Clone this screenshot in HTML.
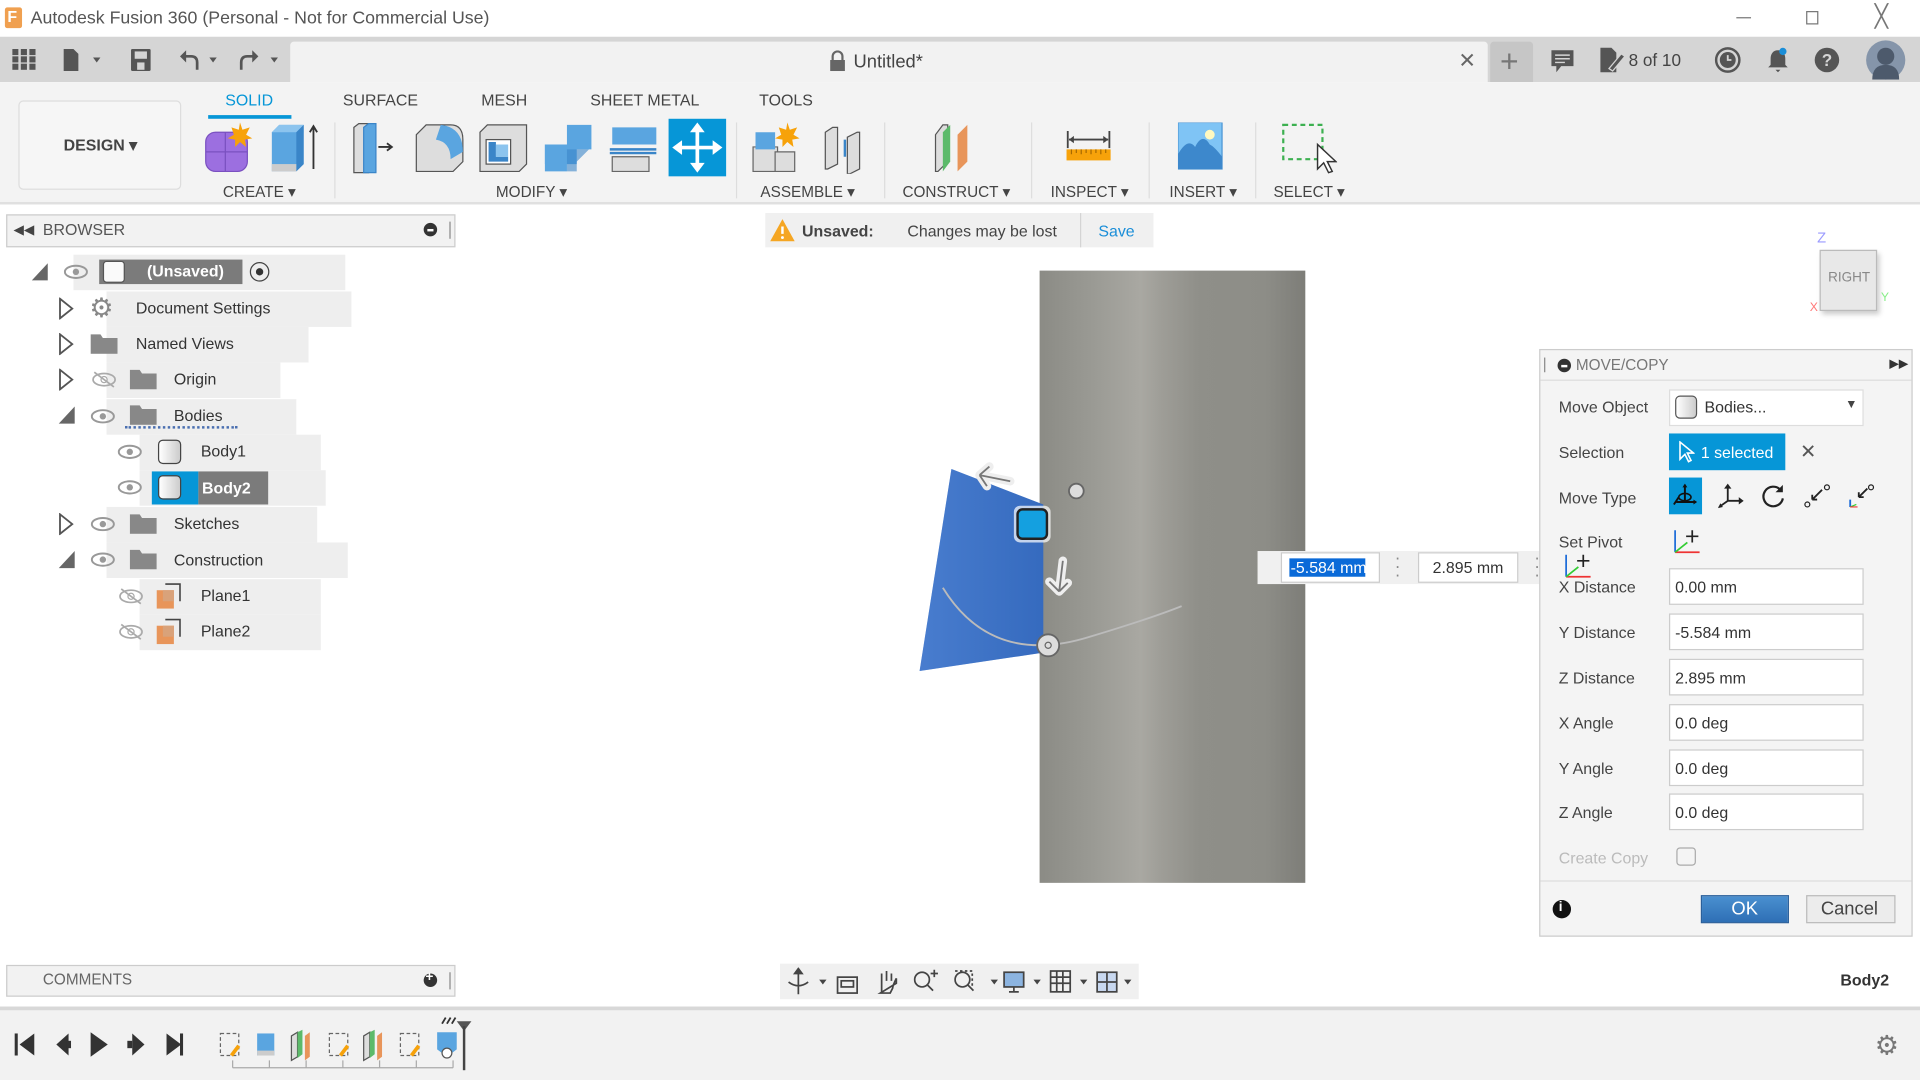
<!DOCTYPE html>
<html><head><meta charset="utf-8">
<style>
*{box-sizing:border-box;margin:0;padding:0}
html,body{width:1920px;height:1080px;overflow:hidden;background:#fff;font-family:"Liberation Sans",sans-serif}
#w{position:absolute;left:0;top:0;width:1568px;height:882px;transform:scale(1.22449);transform-origin:0 0;color:#333}
.a{position:absolute}
.t{position:absolute;white-space:nowrap}
.box{position:absolute;background:#eeeeee}
.tree .t{font-size:13px;color:#333}
.inp{position:absolute;left:1363px;width:159px;height:30px;background:#fff;border:1px solid #ccc;font-size:13px;padding:7px 4px;color:#333}
.pl{position:absolute;left:1273px;font-size:13px;color:#444}
.sep{position:absolute;top:100px;width:1px;height:62px;background:#ddd}
</style></head><body><div id="w">

<!-- title bar -->
<div class="a" style="left:0;top:0;width:1568px;height:30px;background:#fff"></div>
<div class="a" style="left:4px;top:6px;width:14px;height:17px;background:#f0a050;border-radius:2px"></div>
<div class="t" style="left:6px;top:6px;font-size:13px;font-weight:bold;color:#fff">F</div>
<div class="t" style="left:25px;top:7px;font-size:14.5px;color:#555">Autodesk Fusion 360 (Personal - Not for Commercial Use)</div>
<div class="a" style="left:1418px;top:14px;width:12px;height:1px;background:#777"></div>
<div class="a" style="left:1475px;top:9px;width:10px;height:11px;border:1px solid #777"></div>
<div class="t" style="left:1531px;top:3px;font-size:18px;color:#777">╳</div>

<!-- tab bar -->
<div class="a" style="left:0;top:30px;width:1568px;height:37px;background:#d5d5d5"></div>
<div class="a" style="left:237px;top:34px;width:978px;height:33px;background:#f2f2f2;border-radius:3px 3px 0 0"></div>
<svg class="a" style="left:10px;top:40px" width="20" height="18"><g fill="#555"><rect x="0" y="0" width="5" height="5"/><rect x="7" y="0" width="5" height="5"/><rect x="14" y="0" width="5" height="5"/><rect x="0" y="6" width="5" height="5"/><rect x="7" y="6" width="5" height="5"/><rect x="14" y="6" width="5" height="5"/><rect x="0" y="12" width="5" height="5"/><rect x="7" y="12" width="5" height="5"/><rect x="14" y="12" width="5" height="5"/></g></svg>
<svg class="a" style="left:50px;top:38px" width="36" height="22"><path d="M2 2h8l4 4v14H2z" fill="#555"/><path d="M26 9l3 4 3-4z" fill="#555"/></svg>
<svg class="a" style="left:106px;top:39px" width="18" height="20"><rect x="1" y="1" width="16" height="18" fill="#555" rx="1"/><rect x="4" y="3" width="10" height="6" fill="#d5d5d5"/><rect x="6" y="12" width="6" height="6" fill="#d5d5d5"/></svg>
<svg class="a" style="left:145px;top:38px" width="90" height="22">
<path d="M16 19V13q0-5-5-5H4" stroke="#555" stroke-width="2.2" fill="none"/><path d="M2 8l5-5v10z" fill="#555"/>
<path d="M26 9l3 4 3-4z" fill="#555"/>
<path d="M52 19V13q0-5 5-5h7" stroke="#555" stroke-width="2.2" fill="none"/><path d="M66 8l-5-5v10z" fill="#555"/>
<path d="M76 9l3 4 3-4z" fill="#555"/></svg>
<svg class="a" style="left:677px;top:41px" width="14" height="18"><path d="M3 8V5a4 4 0 0 1 8 0v3" stroke="#666" stroke-width="1.8" fill="none"/><rect x="1" y="8" width="12" height="9" fill="#666"/></svg>
<div class="t" style="left:697px;top:42px;font-size:15px;color:#444">Untitled*</div>
<div class="t" style="left:1191px;top:40px;font-size:17px;color:#666">✕</div>
<div class="a" style="left:1217px;top:34px;width:35px;height:33px;background:#c6c6c6;border-radius:3px 3px 0 0"></div>
<div class="t" style="left:1225px;top:35px;font-size:26px;color:#777">+</div>
<svg class="a" style="left:1266px;top:40px" width="20" height="20"><path d="M1 1h18v13H9l-4 5v-5H1z" fill="#555"/><path d="M4 5h12M4 8h12M4 11h8" stroke="#d5d5d5" stroke-width="1.2"/></svg>
<svg class="a" style="left:1305px;top:38px" width="24" height="22"><path d="M2 1h9l4 4v16H2z" fill="#555"/><path d="M9 18l10-12 3 2-10 12z" fill="#555" stroke="#d5d5d5"/></svg>
<div class="t" style="left:1330px;top:41px;font-size:14px;color:#444">8 of 10</div>
<svg class="a" style="left:1400px;top:38px" width="22" height="22"><circle cx="11" cy="11" r="9.5" fill="none" stroke="#555" stroke-width="2"/><circle cx="11" cy="11" r="6.5" fill="#555"/><path d="M11 7v4h3" stroke="#d5d5d5" stroke-width="1.5" fill="none"/></svg>
<svg class="a" style="left:1442px;top:38px" width="20" height="22"><path d="M10 3c-4 0-6 3-6 7v5l-2 2h16l-2-2v-5c0-4-2-7-6-7zM8 19h4l-2 2z" fill="#555"/><circle cx="14" cy="4" r="3" fill="#1a8ed8"/></svg>
<svg class="a" style="left:1481px;top:38px" width="22" height="22"><circle cx="11" cy="11" r="10" fill="#555"/><text x="11" y="16" font-size="14" font-weight="bold" text-anchor="middle" fill="#d5d5d5" font-family="Liberation Sans">?</text></svg>
<div class="a" style="left:1524px;top:33px;width:32px;height:32px;border-radius:50%;background:#8595aa"></div>
<svg class="a" style="left:1524px;top:33px" width="32" height="32"><circle cx="16" cy="13" r="7" fill="#4d5a6c"/><path d="M5 32q0-12 11-12t11 12z" fill="#4d5a6c"/></svg>

<!-- ribbon -->
<div class="a" style="left:0;top:67px;width:1568px;height:100px;background:#f3f3f3;border-bottom:2px solid #e0e0e0"></div>
<div class="a" style="left:15px;top:82px;width:133px;height:73px;background:#f6f6f6;border:1px solid #ddd;border-radius:4px"></div>
<div class="t" style="left:52px;top:111px;font-size:13px;font-weight:bold;color:#444">DESIGN ▾</div>
<div class="t" style="left:184px;top:74px;font-size:13px;color:#0696d7">SOLID</div>
<div class="a" style="left:170px;top:94px;width:68px;height:3px;background:#0696d7"></div>
<div class="t" style="left:280px;top:74px;font-size:13px;color:#444">SURFACE</div>
<div class="t" style="left:393px;top:74px;font-size:13px;color:#444">MESH</div>
<div class="t" style="left:482px;top:74px;font-size:13px;color:#444">SHEET METAL</div>
<div class="t" style="left:620px;top:74px;font-size:13px;color:#444">TOOLS</div>
<div class="t" style="left:182px;top:149px;font-size:12.5px;color:#444">CREATE ▾</div>
<div class="t" style="left:405px;top:149px;font-size:12.5px;color:#444">MODIFY ▾</div>
<div class="t" style="left:621px;top:149px;font-size:12.5px;color:#444">ASSEMBLE ▾</div>
<div class="t" style="left:737px;top:149px;font-size:12.5px;color:#444">CONSTRUCT ▾</div>
<div class="t" style="left:858px;top:149px;font-size:12.5px;color:#444">INSPECT ▾</div>
<div class="t" style="left:955px;top:149px;font-size:12.5px;color:#444">INSERT ▾</div>
<div class="t" style="left:1040px;top:149px;font-size:12.5px;color:#444">SELECT ▾</div>
<div class="sep" style="left:273px"></div><div class="sep" style="left:601px"></div><div class="sep" style="left:722px"></div><div class="sep" style="left:842px"></div><div class="sep" style="left:938px"></div><div class="sep" style="left:1025px"></div>
<svg class="a" style="left:166px;top:100px" width="44" height="42"><rect x="2" y="8" width="34" height="32" rx="8" fill="#9c6fe0" stroke="#7a50c0"/><path d="M2 24h34M18 8v32" stroke="#7a50c0"/><path d="M30 0l2 6 6-2-3 6 5 3-6 1 1 6-5-4-4 4 0-6-6-1 5-3-2-6 6 2z" fill="#f7a20a"/></svg>
<svg class="a" style="left:220px;top:100px" width="42" height="42"><path d="M2 8l6-6h20v32l-6 6H2z" fill="#5aa5e0"/><path d="M22 8h-20l6-6h20z" fill="#8cc4ee"/><path d="M22 8v32l6-6V2z" fill="#3a85c8"/><rect x="2" y="34" width="20" height="6" fill="#ccc"/><path d="M36 38V4M33 8l3-5 3 5" stroke="#333" stroke-width="1.5" fill="none"/></svg>
<svg class="a" style="left:287px;top:100px" width="40" height="42"><path d="M2 4l4-3h8v40H2z" fill="#ddd" stroke="#555"/><path d="M10 4l4-3h6v40H10z" fill="#5aa5e0" stroke="#3a85c8"/><path d="M22 20h10M29 17l4 3-4 3" stroke="#333" stroke-width="1.5" fill="none"/></svg>
<svg class="a" style="left:338px;top:100px" width="42" height="42"><path d="M2 10l8-8h20q10 0 10 12v18l-8 8H2z" fill="#ddd" stroke="#555"/><path d="M22 2q18 2 18 22l-10 6q0-14-12-16z" fill="#5aa5e0"/></svg>
<svg class="a" style="left:390px;top:100px" width="42" height="42"><path d="M2 8l6-6h32v32l-6 6H2z" fill="#ddd" stroke="#555"/><rect x="7" y="14" width="20" height="20" fill="#fff" stroke="#555"/><path d="M9 16h6v12h10v4H9z" fill="#3a85c8"/><path d="M15 28h10v-10h-10z" fill="#8cc4ee"/></svg>
<svg class="a" style="left:443px;top:100px" width="42" height="42"><path d="M20 2h20v20H28v12H2V18h18z" fill="#5aa5e0"/><path d="M2 18h18v22H2z" fill="#5aa5e0"/><path d="M20 22h18l-10 10v8H20z" fill="#3a85c8" opacity=".6"/></svg>
<svg class="a" style="left:496px;top:100px" width="42" height="42"><path d="M4 4h36v14H4z" fill="#5aa5e0"/><path d="M2 22h38M2 25h38" stroke="#3a85c8" stroke-width="2"/><path d="M4 28h30v12H4z" fill="#ddd" stroke="#666"/></svg>
<div class="a" style="left:546px;top:97px;width:47px;height:47px;background:#0696d7"></div>
<svg class="a" style="left:546px;top:97px" width="47" height="47"><path d="M23.5 5v37M5 23.5h37" stroke="#fff" stroke-width="3"/><path d="M23.5 3l-6 8h12zM23.5 44l-6-8h12zM3 23.5l8-6v12zM44 23.5l-8-6v12z" fill="#fff"/></svg>
<svg class="a" style="left:613px;top:100px" width="44" height="42"><path d="M2 20h20v20H2z" fill="#ddd" stroke="#666"/><path d="M20 24h16v16H20z" fill="#ddd" stroke="#666"/><path d="M4 8h16v14H4z" fill="#5aa5e0"/><path d="M30 0l2 6 6-2-3 6 5 3-6 1 1 6-5-4-4 4 0-6-6-1 5-3-2-6 6 2z" fill="#f7a20a"/></svg>
<svg class="a" style="left:668px;top:100px" width="40" height="42"><path d="M6 8l6-4h4v30l-8 4H6z" fill="#ddd" stroke="#555"/><path d="M24 12l8-4h2v30l-8 4h-2z" fill="#ddd" stroke="#555"/><path d="M22 14v14" stroke="#3a85c8" stroke-width="2"/></svg>
<svg class="a" style="left:760px;top:100px" width="42" height="42"><path d="M4 10l6-8h4v30l-8 8H4z" fill="#ddd" stroke="#555"/><path d="M10 8l6-6v30l-6 8z" fill="#5cba6a"/><path d="M22 10l8-8v30l-8 8z" fill="#e8955a"/></svg>
<svg class="a" style="left:870px;top:105px" width="40" height="30"><path d="M2 2v14M36 2v14M3 9h32" stroke="#444" stroke-width="1.5"/><path d="M3 9l4-3v6zM35 9l-4-3v6z" fill="#444"/><rect x="1" y="17" width="36" height="9" fill="#f7a20a"/><path d="M5 17v4M9 17v3M13 17v4M17 17v3M21 17v4M25 17v3M29 17v4M33 17v3" stroke="#a86a00"/></svg>
<svg class="a" style="left:962px;top:100px" width="38" height="40"><rect x="0" y="0" width="36" height="38" fill="#7fc4f5" stroke="#4a95d5"/><path d="M0 38V26q8-14 14-6 6-12 12-2 4 2 10 10v10z" fill="#3d88cc"/><circle cx="26" cy="10" r="4" fill="#fff9c0"/></svg>
<svg class="a" style="left:1046px;top:100px" width="46" height="46"><rect x="2" y="2" width="32" height="28" fill="none" stroke="#3cb050" stroke-width="1.8" stroke-dasharray="4 3"/><path d="M30 18v20l5-5 4 8 3-1-4-8h7z" fill="#fff" stroke="#333" stroke-width="1.2"/></svg>

<!-- browser -->
<div class="a" style="left:5px;top:175px;width:367px;height:27px;background:#f2f2f2;border:1px solid #ccc"></div>
<div class="t" style="left:11px;top:181px;font-size:11px;color:#444">◀◀</div>
<div class="t" style="left:35px;top:180px;font-size:13px;color:#555">BROWSER</div>
<div class="a" style="left:346px;top:182px;width:11px;height:11px;border-radius:50%;background:#333"></div>
<div class="a" style="left:349px;top:187px;width:5px;height:1.5px;background:#fff"></div>
<div class="a" style="left:367px;top:181px;width:1px;height:14px;background:#888"></div>

<div class="tree">
<div class="box" style="left:60px;top:208px;width:222px;height:29px"></div>
<svg class="a" style="left:25px;top:214px" width="16" height="16"><path d="M14 1v14H1z" fill="#666"/></svg>
<svg class="a" style="left:52px;top:216px" width="20" height="12"><ellipse cx="10" cy="6" rx="9" ry="5" fill="none" stroke="#999" stroke-width="1.6"/><circle cx="10" cy="6" r="2.6" fill="#999"/></svg>
<div class="a" style="left:81px;top:212px;width:117px;height:20px;background:#7b7b7b"></div>
<div class="a" style="left:84px;top:213px;width:18px;height:18px;background:#fafafa;border:1px solid #555;border-radius:3px"></div>
<div class="t" style="left:120px;top:214px;font-weight:bold;color:#fff">(Unsaved)</div>
<div class="a" style="left:204px;top:214px;width:16px;height:16px;border-radius:50%;border:1.5px solid #444"></div>
<div class="a" style="left:209px;top:219px;width:6px;height:6px;border-radius:50%;background:#333"></div>
<div class="box" style="left:87px;top:238px;width:200px;height:29px"></div>
<svg class="a" style="left:47px;top:243px" width="14" height="18"><path d="M2 1l10 8-10 8z" fill="none" stroke="#555" stroke-width="1.5"/></svg>
<div class="t" style="left:73px;top:239px;font-size:22px;color:#888">⚙</div>
<div class="t" style="left:111px;top:244px">Document Settings</div>
<div class="box" style="left:87px;top:267px;width:165px;height:29px"></div>
<svg class="a" style="left:47px;top:272px" width="14" height="18"><path d="M2 1l10 8-10 8z" fill="none" stroke="#555" stroke-width="1.5"/></svg>
<svg class="a" style="left:74px;top:273px" width="22" height="16"><path d="M0 0h8l2 3h12v13H0z" fill="#888"/></svg>
<div class="t" style="left:111px;top:273px">Named Views</div>
<div class="box" style="left:87px;top:296px;width:142px;height:29px"></div>
<svg class="a" style="left:47px;top:301px" width="14" height="18"><path d="M2 1l10 8-10 8z" fill="none" stroke="#555" stroke-width="1.5"/></svg>
<svg class="a" style="left:74px;top:303px" width="22" height="14"><ellipse cx="11" cy="7" rx="9" ry="5" fill="none" stroke="#aaa" stroke-width="1.4"/><circle cx="11" cy="7" r="2.5" fill="none" stroke="#aaa"/><path d="M3 1l16 12" stroke="#aaa" stroke-width="1.4"/></svg>
<svg class="a" style="left:106px;top:302px" width="22" height="16"><path d="M0 0h8l2 3h12v13H0z" fill="#888"/></svg>
<div class="t" style="left:142px;top:302px">Origin</div>
<div class="box" style="left:87px;top:326px;width:155px;height:29px"></div>
<svg class="a" style="left:47px;top:331px" width="16" height="16"><path d="M14 1v14H1z" fill="#666"/></svg>
<svg class="a" style="left:74px;top:334px" width="20" height="12"><ellipse cx="10" cy="6" rx="9" ry="5" fill="none" stroke="#999" stroke-width="1.6"/><circle cx="10" cy="6" r="2.6" fill="#999"/></svg>
<svg class="a" style="left:106px;top:331px" width="22" height="16"><path d="M0 0h8l2 3h12v13H0z" fill="#888"/></svg>
<div class="t" style="left:142px;top:332px">Bodies</div>
<div class="a" style="left:102px;top:347px;width:92px;height:3px;border-bottom:2px dotted #4a6fb0"></div>
<div class="box" style="left:114px;top:355px;width:148px;height:29px"></div>
<svg class="a" style="left:96px;top:363px" width="20" height="12"><ellipse cx="10" cy="6" rx="9" ry="5" fill="none" stroke="#999" stroke-width="1.6"/><circle cx="10" cy="6" r="2.6" fill="#999"/></svg>
<div class="a" style="left:129px;top:359px;width:19px;height:20px;background:linear-gradient(90deg,#fff,#ccc);border:1.5px solid #444;border-radius:4px"></div>
<div class="t" style="left:164px;top:361px">Body1</div>
<div class="box" style="left:114px;top:384px;width:152px;height:29px"></div>
<svg class="a" style="left:96px;top:392px" width="20" height="12"><ellipse cx="10" cy="6" rx="9" ry="5" fill="none" stroke="#999" stroke-width="1.6"/><circle cx="10" cy="6" r="2.6" fill="#999"/></svg>
<div class="a" style="left:124px;top:385px;width:38px;height:27px;background:#0696d7"></div>
<div class="a" style="left:162px;top:385px;width:57px;height:27px;background:#7b7b7b"></div>
<div class="a" style="left:129px;top:388px;width:19px;height:20px;background:linear-gradient(90deg,#fff,#ccc);border:1.5px solid #444;border-radius:4px"></div>
<div class="t" style="left:165px;top:391px;font-weight:bold;color:#fff">Body2</div>
<div class="box" style="left:87px;top:414px;width:172px;height:29px"></div>
<svg class="a" style="left:47px;top:419px" width="14" height="18"><path d="M2 1l10 8-10 8z" fill="none" stroke="#555" stroke-width="1.5"/></svg>
<svg class="a" style="left:74px;top:422px" width="20" height="12"><ellipse cx="10" cy="6" rx="9" ry="5" fill="none" stroke="#999" stroke-width="1.6"/><circle cx="10" cy="6" r="2.6" fill="#999"/></svg>
<svg class="a" style="left:106px;top:420px" width="22" height="16"><path d="M0 0h8l2 3h12v13H0z" fill="#888"/></svg>
<div class="t" style="left:142px;top:420px">Sketches</div>
<div class="box" style="left:87px;top:443px;width:197px;height:29px"></div>
<svg class="a" style="left:47px;top:449px" width="16" height="16"><path d="M14 1v14H1z" fill="#666"/></svg>
<svg class="a" style="left:74px;top:451px" width="20" height="12"><ellipse cx="10" cy="6" rx="9" ry="5" fill="none" stroke="#999" stroke-width="1.6"/><circle cx="10" cy="6" r="2.6" fill="#999"/></svg>
<svg class="a" style="left:106px;top:449px" width="22" height="16"><path d="M0 0h8l2 3h12v13H0z" fill="#888"/></svg>
<div class="t" style="left:142px;top:450px">Construction</div>
<div class="box" style="left:114px;top:473px;width:148px;height:29px"></div>
<svg class="a" style="left:96px;top:480px" width="22" height="14"><ellipse cx="11" cy="7" rx="9" ry="5" fill="none" stroke="#aaa" stroke-width="1.4"/><circle cx="11" cy="7" r="2.5" fill="none" stroke="#aaa"/><path d="M3 1l16 12" stroke="#aaa" stroke-width="1.4"/></svg>
<svg class="a" style="left:127px;top:476px" width="24" height="22"><path d="M8 1h12v14" fill="none" stroke="#444" stroke-width="1.3"/><rect x="1" y="6" width="14" height="15" fill="#e8955a"/><rect x="6" y="6" width="9" height="9" fill="#d9a27a"/></svg>
<div class="t" style="left:164px;top:479px">Plane1</div>
<div class="box" style="left:114px;top:502px;width:148px;height:29px"></div>
<svg class="a" style="left:96px;top:509px" width="22" height="14"><ellipse cx="11" cy="7" rx="9" ry="5" fill="none" stroke="#aaa" stroke-width="1.4"/><circle cx="11" cy="7" r="2.5" fill="none" stroke="#aaa"/><path d="M3 1l16 12" stroke="#aaa" stroke-width="1.4"/></svg>
<svg class="a" style="left:127px;top:505px" width="24" height="22"><path d="M8 1h12v14" fill="none" stroke="#444" stroke-width="1.3"/><rect x="1" y="6" width="14" height="15" fill="#e8955a"/><rect x="6" y="6" width="9" height="9" fill="#d9a27a"/></svg>
<div class="t" style="left:164px;top:508px">Plane2</div>
</div>

<!-- unsaved banner -->
<div class="a" style="left:625px;top:174px;width:317px;height:28px;background:#f0f0f0"></div>
<svg class="a" style="left:628px;top:178px" width="22" height="20"><path d="M11 1L21 19H1z" fill="#f5a623"/><path d="M11 7v6" stroke="#fff" stroke-width="2"/><circle cx="11" cy="16" r="1.2" fill="#fff"/></svg>
<div class="t" style="left:655px;top:181px;font-size:13px;font-weight:bold;color:#444">Unsaved:</div>
<div class="t" style="left:741px;top:181px;font-size:13px;color:#444">Changes may be lost</div>
<div class="a" style="left:882px;top:174px;width:1px;height:28px;background:#d4d4d4"></div>
<div class="t" style="left:897px;top:181px;font-size:13px;color:#1a8ed8">Save</div>

<!-- view cube -->
<div class="t" style="left:1484px;top:187px;font-size:12px;color:#9a9aff">Z</div>
<div class="a" style="left:1486px;top:204px;width:47px;height:50px;background:#e8e8e8;border:1px solid #bbb;box-shadow:2px 3px 4px #ccc"></div>
<div class="t" style="left:1493px;top:221px;font-size:11px;color:#888">RIGHT</div>
<div class="t" style="left:1478px;top:246px;font-size:10px;color:#f77">X</div>
<div class="t" style="left:1536px;top:238px;font-size:10px;color:#8e8">Y</div>

<!-- cylinder -->
<div class="a" style="left:849px;top:221px;width:217px;height:500px;background:linear-gradient(90deg,#8b8b85 0%,#9a9a94 20%,#a9a8a2 38%,#9e9d97 46%,#8f8f89 60%,#8d8d87 85%,#7d7d78 100%)"></div>
<svg class="a" style="left:740px;top:370px" width="240" height="190">
<defs><linearGradient id="g"><stop offset="0" stop-color="#5a8ad8"/><stop offset="1" stop-color="#2a5cb0"/></linearGradient></defs>
<path d="M37 13L112 42 112 163 11 178z" fill="#3d74c8"/>
<path d="M37 13L112 42 112 163 11 178z" fill="url(#g)" opacity=".4"/>
<path d="M30 110 Q70 175 150 150 Q200 135 225 125" stroke="#bbb" stroke-width="1.5" fill="none"/>
<path d="M85 23L60 18M60 18l8-7M60 18l6 9" stroke="#eee" stroke-width="7" fill="none" stroke-linecap="round"/>
<path d="M85 23L60 18M60 18l8-7M60 18l6 9" stroke="#777" stroke-width="1.5" fill="none"/>
<path d="M128 88l-3 25M125 113l-8-8M125 113l7-7" stroke="#eee" stroke-width="7" fill="none" stroke-linecap="round"/>
<path d="M128 88l-3 25M125 113l-8-8M125 113l7-7" stroke="#777" stroke-width="1.5" fill="none"/>
<rect x="88" y="43" width="30" height="30" rx="5" fill="#fff" opacity=".7"/>
<rect x="91" y="46" width="24" height="24" rx="4" fill="#14a0e0" stroke="#222" stroke-width="2"/>
<circle cx="139" cy="31" r="6" fill="#ddd" stroke="#666" stroke-width="1.5"/>
<circle cx="116" cy="157" r="9" fill="#ddd" stroke="#666" stroke-width="1.5"/>
<circle cx="116" cy="157" r="2.5" fill="none" stroke="#666"/>
</svg>
<div class="a" style="left:1027px;top:450px;width:232px;height:27px;background:#f0f0f0"></div>
<div class="a" style="left:1046px;top:451px;width:81px;height:25px;background:#fff;border:1px solid #ccc"></div>
<div class="a" style="left:1053px;top:456px;width:62px;height:15px;background:#0a6ad8"></div>
<div class="t" style="left:1054px;top:456px;font-size:13px;color:#fff">-5.584 mm</div>
<div class="t" style="left:1139px;top:452px;font-size:14px;color:#888;line-height:7px">·<br>·<br>·</div>
<div class="a" style="left:1158px;top:451px;width:82px;height:25px;background:#fff;border:1px solid #ccc"></div>
<div class="t" style="left:1170px;top:456px;font-size:13px;color:#333">2.895 mm</div>
<div class="t" style="left:1253px;top:452px;font-size:14px;color:#888;line-height:7px">·<br>·<br>·</div>

<!-- move/copy panel -->
<div class="a" style="left:1257px;top:285px;width:305px;height:480px;background:#f4f4f4;border:1px solid #ccc"></div>
<div class="a" style="left:1258px;top:310px;width:303px;height:1px;background:#ddd"></div>
<div class="a" style="left:1261px;top:292px;width:1px;height:12px;background:#888"></div>
<div class="a" style="left:1272px;top:293px;width:11px;height:11px;border-radius:50%;background:#333"></div>
<div class="a" style="left:1275px;top:298px;width:5px;height:1.5px;background:#fff"></div>
<div class="t" style="left:1287px;top:291px;font-size:12.5px;color:#777">MOVE/COPY</div>
<div class="t" style="left:1543px;top:292px;font-size:10px;color:#333">▶▶</div>
<div class="pl" style="top:325px">Move Object</div>
<div class="a" style="left:1363px;top:318px;width:159px;height:30px;background:#fff;border:1px solid #ddd"></div>
<div class="a" style="left:1368px;top:323px;width:18px;height:19px;background:linear-gradient(90deg,#fff,#ccc);border:1px solid #555;border-radius:4px"></div>
<div class="t" style="left:1392px;top:325px;font-size:13px;color:#333">Bodies...</div>
<div class="t" style="left:1507px;top:325px;font-size:10px;color:#444">▼</div>
<div class="pl" style="top:362px">Selection</div>
<div class="a" style="left:1363px;top:354px;width:95px;height:30px;background:#0696d7"></div>
<svg class="a" style="left:1370px;top:360px" width="14" height="18"><path d="M2 1v14l4-4 3 6 2-1-3-6h5z" fill="#0696d7" stroke="#fff" stroke-width="1.3"/></svg>
<div class="t" style="left:1389px;top:362px;font-size:13px;color:#fff">1 selected</div>
<div class="t" style="left:1470px;top:359px;font-size:16px;color:#555">✕</div>
<div class="pl" style="top:399px">Move Type</div>
<div class="a" style="left:1363px;top:390px;width:27px;height:30px;background:#0696d7"></div>
<svg class="a" style="left:1365px;top:394px" width="24" height="22"><path d="M11 2v14M4 16h16M6 12l-4 6" stroke="#111" stroke-width="1.6" fill="none"/><ellipse cx="11" cy="12" rx="5" ry="3" fill="none" stroke="#111" stroke-width="1.3"/><path d="M11 1l-2 3h4zM21 16l-3-2v4z" fill="#111"/></svg>
<svg class="a" style="left:1401px;top:394px" width="24" height="22"><path d="M10 3v12M10 15h11M10 15l-7 5" stroke="#222" stroke-width="1.5" fill="none"/><path d="M10 1l-3 4h6zM23 15l-4-3v6zM2 21l4-1-2-3z" fill="#222"/></svg>
<svg class="a" style="left:1437px;top:394px" width="22" height="22"><path d="M17 6A8 8 0 1 0 19 13" stroke="#222" stroke-width="1.8" fill="none"/><path d="M19 2v6h-6z" fill="#222"/></svg>
<svg class="a" style="left:1472px;top:394px" width="24" height="22"><circle cx="4" cy="18" r="2" fill="none" stroke="#222"/><circle cx="20" cy="4" r="2" fill="none" stroke="#222"/><path d="M8 14l8-8M8 14v-4M8 14h4" stroke="#222" stroke-width="1.5" fill="none"/></svg>
<svg class="a" style="left:1508px;top:394px" width="24" height="22"><circle cx="20" cy="4" r="2" fill="none" stroke="#222"/><path d="M10 12l7-7M10 12v-4M10 12h4" stroke="#222" stroke-width="1.5" fill="none"/><path d="M3 20v-6" stroke="#1a6ad8" stroke-width="1.5"/><path d="M3 20l5-2" stroke="#3c3"/><path d="M3 20h6" stroke="#e33"/></svg>
<div class="pl" style="top:435px">Set Pivot</div>
<svg class="a" style="left:1366px;top:431px" width="24" height="22"><path d="M2 2v18" stroke="#1a6ad8" stroke-width="1.4"/><path d="M2 20h20" stroke="#e33" stroke-width="1.4"/><path d="M2 20l10-8" stroke="#3c3" stroke-width="1.4"/><path d="M16 2v10M11 7h10" stroke="#222" stroke-width="1.4"/></svg>
<svg class="a" style="left:1277px;top:451px" width="24" height="22"><path d="M2 2v18" stroke="#1a6ad8" stroke-width="1.4"/><path d="M2 20h20" stroke="#e33" stroke-width="1.4"/><path d="M2 20l10-8" stroke="#3c3" stroke-width="1.4"/><path d="M16 2v10M11 7h10" stroke="#222" stroke-width="1.4"/></svg>
<div class="pl" style="top:472px">X Distance</div><div class="inp" style="top:464px">0.00 mm</div>
<div class="pl" style="top:509px">Y Distance</div><div class="inp" style="top:501px">-5.584 mm</div>
<div class="pl" style="top:546px">Z Distance</div><div class="inp" style="top:538px">2.895 mm</div>
<div class="pl" style="top:583px">X Angle</div><div class="inp" style="top:575px">0.0 deg</div>
<div class="pl" style="top:620px">Y Angle</div><div class="inp" style="top:612px">0.0 deg</div>
<div class="pl" style="top:656px">Z Angle</div><div class="inp" style="top:648px">0.0 deg</div>
<div class="pl" style="top:693px;color:#bbb">Create Copy</div>
<div class="a" style="left:1369px;top:692px;width:16px;height:15px;border:1px solid #aaa;border-radius:3px;background:#f4f4f4"></div>
<div class="a" style="left:1258px;top:719px;width:303px;height:1px;background:#ddd"></div>
<div class="a" style="left:1268px;top:735px;width:15px;height:15px;border-radius:50%;background:#111"></div>
<div class="t" style="left:1273px;top:735px;font-size:11px;font-weight:bold;color:#fff">i</div>
<div class="a" style="left:1389px;top:731px;width:72px;height:23px;background:linear-gradient(#4a90d0,#2e6fb5);border:1px solid #2a5f9a"></div>
<div class="t" style="left:1414px;top:734px;font-size:15px;color:#fff">OK</div>
<div class="a" style="left:1475px;top:731px;width:73px;height:23px;background:#ececec;border:1px solid #bbb"></div>
<div class="t" style="left:1487px;top:734px;font-size:15px;color:#444">Cancel</div>

<!-- comments -->
<div class="a" style="left:5px;top:788px;width:367px;height:26px;background:#f2f2f2;border:1px solid #ccc"></div>
<div class="t" style="left:35px;top:793px;font-size:12.5px;color:#666">COMMENTS</div>
<div class="a" style="left:346px;top:795px;width:11px;height:11px;border-radius:50%;background:#333"></div>
<div class="t" style="left:347.5px;top:792px;font-size:11px;font-weight:bold;color:#fff">+</div>
<div class="a" style="left:367px;top:794px;width:1px;height:14px;background:#888"></div>
<!-- nav bar -->
<div class="a" style="left:637px;top:787px;width:293px;height:29px;background:#f0f0f0"></div>
<svg class="a" style="left:640px;top:790px" width="290" height="24"><g stroke="#444" stroke-width="1.4" fill="none">
<path d="M12 2v20M4 12q8 6 16 0"/><path d="M12 1l-3 4h6z" fill="#444"/>
<rect x="44" y="8" width="16" height="13"/><rect x="47" y="11" width="10" height="5"/>
<path d="M80 21v-10M80 11v-6M84 11v-8M88 11v-6M92 13v-4q-3 6-3 8l-2 4h-8z"/>
<circle cx="113" cy="10" r="6"/><path d="M117 14l5 5M120 5h6M123 2v6"/>
<circle cx="146" cy="10" r="6"/><path d="M150 14l5 5"/><path d="M140 3h14v14" stroke-dasharray="2 2"/>
<rect x="180" y="4" width="16" height="12" fill="#8cb4e0"/><path d="M188 16v4M184 20h8"/>
<rect x="218" y="3" width="16" height="17"/><path d="M218 8h16M218 13h16M223 3v17M228 3v17"/>
<rect x="256" y="4" width="16" height="16" fill="#c8d8f0"/><path d="M256 12h16M264 4v16"/>
</g><g fill="#444"><path d="M29 10l3 4 3-4zM169 10l3 4 3-4zM204 10l3 4 3-4zM242 10l3 4 3-4zM278 10l3 4 3-4z"/></g></svg>
<div class="t" style="left:1503px;top:793px;font-size:13px;font-weight:bold;color:#333">Body2</div>

<!-- timeline -->
<div class="a" style="left:0;top:822px;width:1568px;height:60px;background:#f2f2f2;border-top:3px solid #d8d8d8"></div>
<svg class="a" style="left:10px;top:842px" width="150" height="22"><g fill="#333"><rect x="2" y="2" width="2.5" height="18"/><path d="M18 2L6 11l12 9z"/><path d="M46 2L36 11l10 9z"/><rect x="44" y="8" width="4" height="6"/><path d="M64 1l14 10-14 10z"/><path d="M98 2l10 9-10 9z"/><rect x="94" y="8" width="4" height="6"/><path d="M126 2l12 9-12 9z"/><rect x="137" y="2" width="2.5" height="18"/></g></svg>
<svg class="a" style="left:175px;top:828px" width="215" height="54"><g>
<rect x="5" y="16" width="15" height="18" fill="none" stroke="#666" stroke-dasharray="3 2"/><path d="M14 34l6-8" stroke="#f7a20a" stroke-width="3"/>
<rect x="35" y="16" width="14" height="18" fill="#5aa5e0"/><rect x="35" y="30" width="14" height="4" fill="#ccc"/>
<path d="M63 18l5-3v20l-5 3z" fill="#ddd" stroke="#555"/><path d="M68 15l4-2v20l-4 3z" fill="#5cba6a"/><path d="M74 18l4-3v20l-4 3z" fill="#e8955a"/>
<rect x="94" y="16" width="15" height="18" fill="none" stroke="#666" stroke-dasharray="3 2"/><path d="M103 34l6-8" stroke="#f7a20a" stroke-width="3"/>
<path d="M122 18l5-3v20l-5 3z" fill="#ddd" stroke="#555"/><path d="M127 15l4-2v20l-4 3z" fill="#5cba6a"/><path d="M133 18l4-3v20l-4 3z" fill="#e8955a"/>
<rect x="152" y="16" width="15" height="18" fill="none" stroke="#666" stroke-dasharray="3 2"/><path d="M161 34l6-8" stroke="#f7a20a" stroke-width="3"/>
<path d="M182 15h16v14l-8 6-8-6z" fill="#5aa5e0"/><circle cx="190" cy="32" r="4" fill="#fff" stroke="#555"/>
<path d="M186 8l3-5M190 8l3-5M194 8l3-5" stroke="#333" stroke-width="1.5"/>
<path d="M198 6h12l-6 8z" fill="#555"/><rect x="203" y="10" width="2" height="36" fill="#444"/>
<path d="M15 44h180M15 38v6M45 38v6M75 38v6M105 38v6M135 38v6M165 38v6M195 38v6" stroke="#aaa"/>
</g></svg>
<div class="t" style="left:1531px;top:841px;font-size:22px;color:#777">⚙</div>
</div></body></html>
